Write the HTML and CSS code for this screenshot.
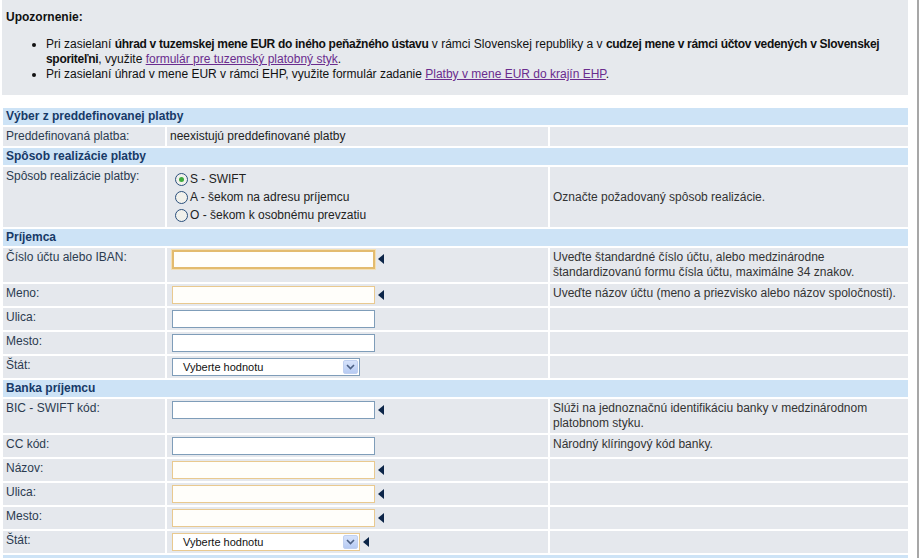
FILE: index.html
```html
<!DOCTYPE html>
<html lang="sk">
<head>
  <meta charset="UTF-8">
  <title>Zahraničná platba</title>
  <link rel="stylesheet" href="styles.css">
</head>
<body>

  <div class="page">

    <div class="notice">
      <p class="notice-title">Upozornenie:</p>
      <ul>
        <li>Pri zasielaní <b>úhrad v tuzemskej mene EUR do iného peňažného ústavu</b> v rámci Slovenskej republiky a v <b>cudzej mene v rámci účtov vedených v Slovenskej</b> <b>sporiteľni</b>, využite <a href="#">formulár pre tuzemský platobný styk</a>.</li>
        <li>Pri zasielaní úhrad v mene EUR v rámci EHP, využite formulár zadanie <a href="#">Platby v mene EUR do krajín EHP</a>.</li>
      </ul>
    </div>

    <table class="form-table">
      <colgroup>
        <col class="col-label">
        <col class="col-value">
        <col class="col-help">
      </colgroup>

      <tr class="section"><td colspan="3">Výber z preddefinovanej platby</td></tr>
      <tr>
        <td class="label">Preddefinovaná platba:</td>
        <td class="text">neexistujú preddefinované platby</td>
        <td></td>
      </tr>

      <tr class="section"><td colspan="3">Spôsob realizácie platby</td></tr>
      <tr>
        <td class="label">Spôsob realizácie platby:</td>
        <td>
          <div class="radios">
            <label class="radio"><span class="dot checked"></span>S - SWIFT</label>
            <label class="radio"><span class="dot"></span>A - šekom na adresu príjemcu</label>
            <label class="radio"><span class="dot"></span>O - šekom k osobnému prevzatiu</label>
          </div>
        </td>
        <td class="help middle">Označte požadovaný spôsob realizácie.</td>
      </tr>

      <tr class="section"><td colspan="3">Príjemca</td></tr>
      <tr>
        <td class="label">Číslo účtu alebo IBAN:</td>
        <td><input class="field required focused" type="text"><span class="mark"></span></td>
        <td class="help">Uveďte štandardné číslo účtu, alebo medzinárodne štandardizovanú formu čísla účtu, maximálne 34 znakov.</td>
      </tr>
      <tr>
        <td class="label">Meno:</td>
        <td><input class="field required" type="text"><span class="mark"></span></td>
        <td class="help">Uveďte názov účtu (meno a priezvisko alebo názov spoločnosti).</td>
      </tr>
      <tr>
        <td class="label">Ulica:</td>
        <td><input class="field" type="text"></td>
        <td></td>
      </tr>
      <tr>
        <td class="label">Mesto:</td>
        <td><input class="field" type="text"></td>
        <td></td>
      </tr>
      <tr>
        <td class="label">Štát:</td>
        <td>
          <span class="select"><span class="select-value">Vyberte hodnotu</span><span class="select-btn"><svg width="9" height="6" viewBox="0 0 9 6"><path d="M1 1 L4.5 4.5 L8 1" fill="none" stroke="#4d6185" stroke-width="1.6"/></svg></span></span>
        </td>
        <td></td>
      </tr>

      <tr class="section"><td colspan="3">Banka príjemcu</td></tr>
      <tr>
        <td class="label">BIC - SWIFT kód:</td>
        <td><input class="field" type="text"><span class="mark"></span></td>
        <td class="help">Slúži na jednoznačnú identifikáciu banky v medzinárodnom platobnom styku.</td>
      </tr>
      <tr>
        <td class="label">CC kód:</td>
        <td><input class="field" type="text"></td>
        <td class="help">Národný klíringový kód banky.</td>
      </tr>
      <tr>
        <td class="label">Názov:</td>
        <td><input class="field required" type="text"><span class="mark"></span></td>
        <td></td>
      </tr>
      <tr>
        <td class="label">Ulica:</td>
        <td><input class="field required" type="text"><span class="mark"></span></td>
        <td></td>
      </tr>
      <tr>
        <td class="label">Mesto:</td>
        <td><input class="field required" type="text"><span class="mark"></span></td>
        <td></td>
      </tr>
      <tr>
        <td class="label">Štát:</td>
        <td>
          <span class="select required"><span class="select-value">Vyberte hodnotu</span><span class="select-btn"><svg width="9" height="6" viewBox="0 0 9 6"><path d="M1 1 L4.5 4.5 L8 1" fill="none" stroke="#4d6185" stroke-width="1.6"/></svg></span></span><span class="mark"></span>
        </td>
        <td></td>
      </tr>

      <tr class="section"><td colspan="3">&nbsp;</td></tr>
    </table>

  </div>

</body>
</html>
```

FILE: styles.css
```css
html, body {
  margin: 0;
  padding: 0;
  background: white;
}

body {
  font-family: "Liberation Sans", Arial, sans-serif;
  font-size: 12px;
  color: #2c3a4c;
  overflow: hidden;
}

.page {
  width: 917px;
  min-height: 558px;
  border-right: 2px solid #a7a7a7;
}

.notice {
  background: #e6e9ed;
  margin-left: 2px;
  width: 906px;
  height: 95px;
  padding: 10px 0 0 4px;
  box-sizing: border-box;
  color: #111;
}

.notice-title {
  font-weight: 700;
  margin: 0 0 12px;
  line-height: 15px;
}

.notice ul {
  margin: 0;
  padding-left: 40px;
  line-height: 15px;
}

.notice b {
  letter-spacing: -0.3px;
}

.notice a {
  color: #6a2c8e;
}

.form-table {
  margin: 11px 0 0 1px;
  width: 909px;
  border-collapse: separate;
  border-spacing: 2px;
  table-layout: fixed;
}

.col-label { width: 162px; }
.col-value { width: 381px; }

.form-table td {
  background: #e5e8ed;
  padding: 2px 3px;
  vertical-align: top;
  line-height: 15px;
}

.form-table tr.section td {
  background: #cde3f6;
  color: #173a68;
  font-weight: 700;
  padding: 1px 3px;
}

.label {
  color: #2b3b50;
}

.help {
  color: #333;
}

.help.middle {
  vertical-align: middle;
}

.text {
  color: #222;
}

.radios {
  padding: 1px 0 1px 5px;
}

.radio {
  display: flex;
  align-items: center;
  height: 18px;
  color: #222;
}

.dot {
  width: 11px;
  height: 11px;
  border: 1px solid #2a4f7c;
  border-radius: 50%;
  background: #f1f1ec;
  margin-right: 2px;
  display: inline-flex;
  align-items: center;
  justify-content: center;
}

.dot.checked::after {
  content: "";
  width: 5px;
  height: 5px;
  border-radius: 50%;
  background: #3daa3d;
}

.field {
  width: 203px;
  height: 18px;
  box-sizing: border-box;
  border: 1px solid #7f9db9;
  background: white;
  margin: 0 0 0 2px;
  padding: 0 3px;
  font: inherit;
  vertical-align: top;
}

.field.required {
  border-color: #e9c98f;
  background: #fffefa;
}

.field.focused {
  border: 2px solid #e3bb6e;
  box-shadow: 0 0 0 1px #f3dfb4;
  height: 19px;
}

.mark {
  display: inline-block;
  width: 0;
  height: 0;
  border-top: 5px solid transparent;
  border-bottom: 5px solid transparent;
  border-right: 6px solid #0c2548;
  margin: 4px 0 0 3px;
  vertical-align: top;
}

.select {
  display: inline-flex;
  align-items: center;
  width: 188px;
  height: 18px;
  box-sizing: border-box;
  border: 1px solid #7f9db9;
  background: white;
  margin-left: 2px;
  vertical-align: top;
  font-size: 11px;
  color: #111;
}

.select.required {
  border-color: #e9c98f;
}

.select-value {
  flex: 1;
  padding-left: 10px;
}

.select-btn {
  width: 15px;
  height: 14px;
  margin-right: 1px;
  border-radius: 2px;
  background: linear-gradient(#d7e3fb, #b7cbf3);
  border: 1px solid #c0d0f0;
  box-sizing: border-box;
  display: flex;
  align-items: center;
  justify-content: center;
}
```
